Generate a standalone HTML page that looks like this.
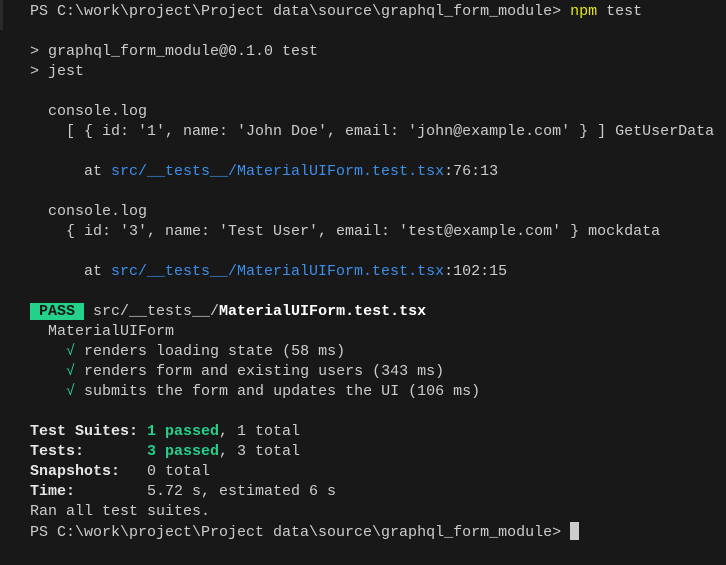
<!DOCTYPE html>
<html><head><style>
html,body{margin:0;padding:0;background:#181818;width:726px;height:565px;overflow:hidden}
pre{margin:0;position:absolute;left:30px;top:2px;font-family:"Liberation Mono",monospace;font-size:15px;line-height:20px;color:#cccccc;white-space:pre}
.y{color:#e5e510}.b{color:#3b8eea}.g{color:#23d18b}.w{color:#fff;font-weight:bold}
.pass{background:#23d18b;color:#181818;font-weight:bold}
.bold{font-weight:bold;color:#e5e5e5}
.cur{display:inline-block;width:9px;height:18px;background:#cccccc;vertical-align:-4px}
.bar{position:absolute;left:0;top:0;width:3px;height:30px;background:#2a2a2a}
</style></head><body>
<div class="bar"></div>
<pre>PS C:\work\project\Project data\source\graphql_form_module&gt; <span class="y">npm</span> test

&gt; graphql_form_module@0.1.0 test
&gt; jest

  console.log
    [ { id: '1', name: 'John Doe', email: 'john@example.com' } ] GetUserData

      at <span class="b">src/__tests__/MaterialUIForm.test.tsx</span>:76:13

  console.log
    { id: '3', name: 'Test User', email: 'test@example.com' } mockdata

      at <span class="b">src/__tests__/MaterialUIForm.test.tsx</span>:102:15

<span class="pass"> PASS </span> src/__tests__/<span class="w">MaterialUIForm.test.tsx</span>
  MaterialUIForm
    <span class="g">√</span> renders loading state (58 ms)
    <span class="g">√</span> renders form and existing users (343 ms)
    <span class="g">√</span> submits the form and updates the UI (106 ms)

<span class="bold">Test Suites: </span><span class="g" style="font-weight:bold">1 passed</span>, 1 total
<span class="bold">Tests:       </span><span class="g" style="font-weight:bold">3 passed</span>, 3 total
<span class="bold">Snapshots:   </span>0 total
<span class="bold">Time:        </span>5.72 s, estimated 6 s
Ran all test suites.
PS C:\work\project\Project data\source\graphql_form_module&gt; <span class="cur"></span></pre>
</body></html>
